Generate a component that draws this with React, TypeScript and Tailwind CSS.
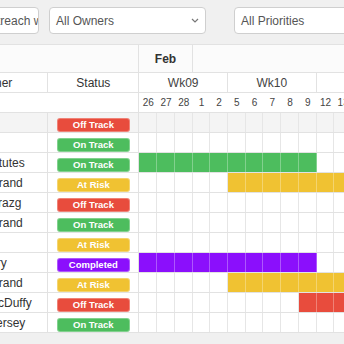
import React from 'react';

// Working days shown on the timeline (Feb 26 – Mar 30)
const days = ['26', '27', '28', '1', '2', '5', '6', '7', '8', '9', '12', '13', '14', '15', '16', '19', '20', '21', '22', '23', '26', '27', '28', '29', '30'];

const months: [string, number][] = [
    ['Feb', 3],
    ['Mar', 22]
];

const weeks: [string, number][] = [
    ['Wk09', 5],
    ['Wk10', 5],
    ['Wk11', 5],
    ['Wk12', 5],
    ['Wk13', 5]
];

type Status = 'Off Track' | 'On Track' | 'At Risk' | 'Completed';

const statusColor: Record<Status, string> = {
    'Off Track': 'bg-[#e84c3d]',
    'On Track': 'bg-[#4dbd5e]',
    'At Risk': 'bg-[#f0c232]',
    'Completed': 'bg-[#8b0ffc]'
};

interface Row {
    owner: string;
    status: Status;
    bar?: [number, number];
    shaded?: boolean;
}

const rows: Row[] = [
    { owner: 'Ann Lee', status: 'Off Track', shaded: true },
    { owner: 'Tim Orr', status: 'On Track' },
    { owner: 'Rebecca Stutes', status: 'On Track', bar: [0, 9] },
    { owner: 'Kathleen Brand', status: 'At Risk', bar: [5, 16] },
    { owner: 'Veronika Brazg', status: 'Off Track' },
    { owner: 'Kathleen Brand', status: 'On Track' },
    { owner: 'Bo Li', status: 'At Risk' },
    { owner: 'Daniel Curry', status: 'Completed', bar: [0, 9] },
    { owner: 'Kathleen Brand', status: 'At Risk', bar: [5, 16] },
    { owner: 'Caroline McDuffy', status: 'Off Track', bar: [9, 18] },
    { owner: 'Michelle Hersey', status: 'On Track' }
];

const Chevron: React.FC = () => (
    <svg width="8" height="5" viewBox="0 0 8 5" className="shrink-0">
        <polyline points="1,1 4,4 7,1" fill="none" stroke="#777" strokeWidth="1.2" />
    </svg>
);

const Select: React.FC<{ label: string }> = ({ label }) => (
    <div className="w-[157px] h-[27px] shrink-0 bg-white border border-[#cfcfcf] rounded-[4px] flex items-center justify-between pl-[6px] pr-[6px] text-[12px] text-[#555]">
        <span className="whitespace-nowrap">{label}</span>
        <Chevron />
    </div>
);

const App: React.FC = () => {
    return (
        <div className="w-[344px] h-[344px] overflow-hidden bg-[#f0f0f0] font-['Liberation_Sans',Arial,sans-serif]">
            {/* Filter bar, scrolled to the right */}
            <div className="flex items-start gap-[10px] ml-[-26px] pt-[7px] h-[44px]">
                <div className="w-[65px] h-[27px] shrink-0 bg-white border border-[#cfcfcf] rounded-[4px] overflow-hidden flex items-center pl-[6px] text-[12px] text-[#555]">
                    <span className="whitespace-nowrap overflow-hidden">Outreach w</span>
                </div>
                <Select label="All Owners" />
                <div className="w-[8px] shrink-0" />
                <Select label="All Priorities" />
            </div>

            {/* Gantt table */}
            <div className="ml-[-68px] bg-white border-t border-[#e2e2e2] text-[#333]">
                {/* Month row */}
                <div className="flex h-[28px] border-b border-[#e2e2e2] bg-[#fbfbfb]">
                    <div className="w-[207.4px] shrink-0 border-r border-[#e2e2e2]" />
                    {months.map(([m, span]) => (
                        <div
                            key={m}
                            className="shrink-0 border-r border-[#e2e2e2] flex items-center justify-center text-[12px] font-bold"
                            style={{ width: span * 17.73 }}
                        >
                            {m}
                        </div>
                    ))}
                </div>

                {/* Week row */}
                <div className="flex h-[20px] border-b border-[#e2e2e2]">
                    <div className="w-[116.3px] shrink-0 border-r border-[#e2e2e2] flex items-center pl-[45px] text-[12px]">Owner</div>
                    <div className="w-[91.1px] shrink-0 border-r border-[#e2e2e2] flex items-center justify-center text-[12px]">Status</div>
                    {weeks.map(([w, span]) => (
                        <div
                            key={w}
                            className="shrink-0 border-r border-[#e2e2e2] flex items-center justify-center text-[12px] text-[#444]"
                            style={{ width: span * 17.73 }}
                        >
                            {w}
                        </div>
                    ))}
                </div>

                {/* Day row */}
                <div className="flex h-[20px] border-b border-[#e2e2e2]">
                    <div className="w-[207.4px] shrink-0 border-r border-[#e2e2e2]" />
                    {days.map((d, i) => (
                        <div key={i} className="w-[17.73px] shrink-0 flex items-center justify-center text-[10px] text-[#444]">
                            {d}
                        </div>
                    ))}
                </div>

                {/* Data rows */}
                {rows.map((row, r) => (
                    <div key={r} className={`flex h-[20px] border-b border-[#e2e2e2] ${row.shaded ? 'bg-[#f4f4f4]' : ''}`}>
                        <div className="w-[116.3px] shrink-0 border-r border-[#e2e2e2] flex items-center pl-[8px] text-[12px] whitespace-nowrap overflow-hidden">
                            {row.owner}
                        </div>
                        <div className="w-[91.1px] shrink-0 border-r border-[#e2e2e2] flex justify-center pt-[5px]">
                            <div className={`w-[73px] h-[13.5px] rounded-[3px] border border-white/30 ${statusColor[row.status]} flex items-center justify-center text-[9.5px] font-bold text-white leading-none`}>
                                {row.status}
                            </div>
                        </div>
                        {days.map((_, i) => {
                            const on = row.bar && i >= row.bar[0] && i <= row.bar[1];
                            return (
                                <div
                                    key={i}
                                    className={`w-[17.73px] shrink-0 border-r ${on ? `${statusColor[row.status]} border-white/30` : 'border-[#e6e6e6]'}`}
                                />
                            );
                        })}
                    </div>
                ))}
            </div>
        </div>
    );
};

export default App;
